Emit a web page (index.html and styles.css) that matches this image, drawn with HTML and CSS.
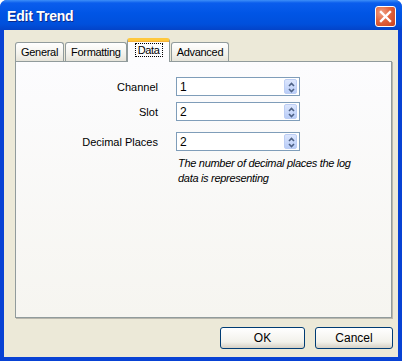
FILE: index.html
```html
<!DOCTYPE html>
<html>
<head>
    <title>Edit Trend</title>
    <link rel="stylesheet" href="styles.css">
</head>
<body>
    <div class="window">
        <div class="titlebar">
            <span class="title">Edit Trend</span>
            <button class="close-btn">
                <svg width="13" height="13" viewBox="0 0 13 13">
                    <path d="M2 2 L11 11 M11 2 L2 11" stroke="#fff" stroke-width="2.4" stroke-linecap="square"/>
                </svg>
            </button>
        </div>
        <div class="content">
            <div class="tabs">
                <div class="tab">General</div>
                <div class="tab">Formatting</div>
                <div class="tab active"><span class="focus">Data</span></div>
                <div class="tab">Advanced</div>
            </div>
            <div class="panel">
                <div class="form">
                    <label>Channel</label>
                    <div class="spin"><span>1</span><i class="spin-btn"></i></div>
                    <label>Slot</label>
                    <div class="spin"><span>2</span><i class="spin-btn"></i></div>
                    <label class="spaced">Decimal Places</label>
                    <div class="spin spaced"><span>2</span><i class="spin-btn"></i></div>
                    <div></div>
                    <p class="help">The number of decimal places the log data is representing</p>
                </div>
            </div>
            <div class="buttons">
                <button class="btn ok">OK</button>
                <button class="btn cancel">Cancel</button>
            </div>
        </div>
    </div>
</body>
</html>
```

FILE: styles.css
```css
body {
    margin: 0;
    background: #fff;
    font-family: "Liberation Sans", Arial, sans-serif;
    font-size: 11px;
}
.window {
    width: 402px;
    height: 361px;
    display: flex;
    flex-direction: column;
    background: #0842d4;
    border-radius: 7px 7px 0 0;
    overflow: hidden;
}
.titlebar {
    height: 30px;
    flex: none;
    display: flex;
    align-items: center;
    justify-content: space-between;
    padding: 0 6px 0 7px;
    background: linear-gradient(#3d8ff8 0%, #0a5ded 10%, #0055e5 45%, #0050dc 80%, #0343c8 100%);
}
.title {
    color: #fff;
    font-weight: bold;
    font-size: 14px;
    letter-spacing: -0.2px;
    text-shadow: 1px 1px 0 #0b2a8c;
    padding-top: 2px;
}
.close-btn {
    width: 21px;
    height: 21px;
    padding: 0;
    margin-top: 2px;
    border: 1px solid #fff;
    border-radius: 3px;
    background: radial-gradient(circle at 30% 30%, #f0a285 0%, #e2643e 45%, #c8401b 100%);
    display: flex;
    align-items: center;
    justify-content: center;
}
.content {
    flex: 1;
    margin: 0 4px 4px 4px;
    background: #ece9d8;
    padding: 9px 6px 0 11px;
    display: flex;
    flex-direction: column;
}
.tabs {
    display: flex;
    align-items: flex-end;
    height: 22px;
    position: relative;
    z-index: 1;
    letter-spacing: -0.3px;
}
.tab {
    height: 18px;
    line-height: 18px;
    padding: 0 5px;
    margin-right: 1px;
    border: 1px solid #919b9c;
    border-bottom: none;
    border-radius: 3px 3px 0 0;
    background: linear-gradient(#ffffff, #f3f2ec 60%, #e6e4da);
    color: #000;
}
.tab.active {
    height: 21px;
    line-height: 19px;
    margin: 0 1px -1px -1px;
    padding: 0 6px 0 7px;
    border-top: 3px solid #ffc83c;
    box-shadow: inset 0 1px 0 #f5b23a;
    background: #fcfcfe;
}
.focus {
    border: 1px dotted #000;
    padding: 0 2px;
}
.panel {
    height: 255px;
    border: 1px solid #919b9c;
    background: linear-gradient(#fcfcfe, #f6f5f0);
    box-shadow: 1px 1px 0 #b9b7ad;
}
.form {
    display: grid;
    grid-template-columns: 142px auto;
    column-gap: 18px;
    row-gap: 6px;
    padding-top: 15px;
    align-items: center;
}
.form label {
    text-align: right;
    font-size: 11px;
}
.form .spaced {
    margin-top: 5px;
}
.spin {
    width: 117px;
    height: 17px;
    border: 1px solid #7f9db9;
    background: #fff;
    display: flex;
    align-items: center;
    justify-content: space-between;
    padding: 0 2px 0 3px;
    box-sizing: content-box;
    font-size: 12px;
}
.spin-btn {
    width: 13px;
    height: 15px;
    border-radius: 2px;
    background:
        url("data:image/svg+xml,%3Csvg xmlns='http://www.w3.org/2000/svg' width='13' height='15'%3E%3Cpath d='M4 6 L6.5 3.5 L9 6 M4 9 L6.5 11.5 L9 9' fill='none' stroke='%234d6185' stroke-width='1.6'/%3E%3C/svg%3E"),
        linear-gradient(#dce6fd, #b9cdf8);
    border: 1px solid #bccdf3;
    box-sizing: border-box;
}
.help {
    margin: -1px 0 0 2px;
    width: 176px;
    font-style: italic;
    letter-spacing: -0.3px;
    line-height: 15px;
}
.buttons {
    display: flex;
    justify-content: flex-end;
    gap: 10px;
    padding-top: 9px;
    margin-right: -1px;
}
.btn {
    height: 22px;
    border: 1px solid #003c74;
    border-radius: 3px;
    background: linear-gradient(#ffffff, #f2f1ea 70%, #d6d0c5);
    font-family: "Liberation Sans", Arial, sans-serif;
    font-size: 12px;
    color: #000;
}
.ok {
    width: 85px;
}
.cancel {
    width: 78px;
}
```
